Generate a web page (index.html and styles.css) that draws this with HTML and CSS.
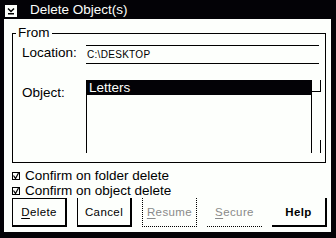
FILE: index.html
```html
<!DOCTYPE html>
<html>
<head>
<meta charset="utf-8">
<link rel="stylesheet" href="styles.css">
</head>
<body>
<div class="window">
  <div class="titlebar">
    <span class="sysmenu">
      <svg width="12" height="12" viewBox="0 0 12 12">
        <rect x="0" y="0" width="12" height="12" fill="#fdfffc"/>
        <path d="M3 3.5 L6 6.5 L9 3.5" fill="none" stroke="#000" stroke-width="1.5"/>
        <rect x="3" y="8" width="6" height="1.5" fill="#000"/>
      </svg>
    </span>
    <span class="title">Delete Object(s)</span>
  </div>
  <div class="client">
    <fieldset class="group">
      <legend class="legend">From</legend>
      <div class="form">
        <span class="label label-loc">Location:</span>
        <div class="field">C:\DESKTOP</div>
        <span class="label label-obj">Object:</span>
        <div class="list">
          <div class="items">
            <div class="item selected">Letters</div>
          </div>
          <div class="scroll">
            <svg width="10" height="73" viewBox="0 0 10 73">
              <rect x="0" y="0" width="1" height="73" fill="#000"/>
              <rect x="9" y="0" width="1" height="12" fill="#000"/>
              <rect x="0" y="11" width="10" height="1" fill="#000"/>
              <rect x="9" y="60" width="1" height="13" fill="#000"/>
            </svg>
          </div>
        </div>
      </div>
    </fieldset>
    <div class="checks">
      <div class="check">
        <svg class="box" width="8" height="8" viewBox="0 0 8 8">
          <rect x="0.5" y="0.5" width="7" height="7" fill="none" stroke="#000"/>
          <path d="M1.5 3.5 L3.5 6.5 L6.5 1" fill="none" stroke="#000" stroke-width="1.2"/>
        </svg>
        <span>Confirm on folder delete</span>
      </div>
      <div class="check">
        <svg class="box" width="8" height="8" viewBox="0 0 8 8">
          <rect x="0.5" y="0.5" width="7" height="7" fill="none" stroke="#000"/>
          <path d="M1.5 3.5 L3.5 6.5 L6.5 1" fill="none" stroke="#000" stroke-width="1.2"/>
        </svg>
        <span>Confirm on object delete</span>
      </div>
    </div>
    <div class="buttons">
      <div class="btn btn-default"><u>D</u>elete</div>
      <div class="btn btn-cancel">Cancel</div>
      <div class="btn btn-disabled btn-framed"><u>R</u>esume</div>
      <div class="btn btn-disabled btn-flat"><u>S</u>ecure</div>
      <div class="btn btn-help">Help</div>
    </div>
  </div>
</div>
</body>
</html>
```
FILE: styles.css
```css
* { box-sizing: border-box; }
html, body { margin: 0; padding: 0; }
body {
  width: 336px;
  height: 238px;
  overflow: hidden;
  font-family: "Liberation Sans", Arial, sans-serif;
  font-size: 13.5px;
  color: #000;
  background: #000;
}
.window {
  width: 336px;
  height: 238px;
  background: #030206;
  display: flex;
  flex-direction: column;
}
.titlebar {
  height: 19px;
  display: flex;
  align-items: center;
  color: #fdfffc;
  flex: none;
}
.sysmenu {
  display: flex;
  margin-left: 5px;
  margin-top: 2px;
}
.title {
  margin-left: 13px;
  line-height: 14px;
  margin-top: 1px;
}
.client {
  flex: 1;
  margin: 0 5px 6px 4px;
  background: #fdfffc;
  display: flex;
  flex-direction: column;
}
.group {
  margin: 8px 5px 0 8px;
  border: 1px solid #000;
  padding: 0 4px 9px 9px;
  min-width: 0;
}
.legend {
  margin-left: -6px;
  padding: 0 2px;
  line-height: 12px;
  height: 12px;
}
.form {
  display: grid;
  grid-template-columns: 64px 1fr;
  align-items: start;
}
.label {
  line-height: 14px;
}
.label-loc {
  margin-top: 7px;
}
.label-obj {
  margin-top: 22px;
}
.field {
  margin-top: 6px;
  margin-right: 2px;
  height: 19px;
  border-top: 1px solid #000;
  border-bottom: 1px solid #000;
  font-size: 10px;
  line-height: 17px;
  padding-left: 1px;
  letter-spacing: 0.3px;
}
.list {
  margin-top: 16px;
  height: 73px;
  border-left: 1px solid #000;
  display: flex;
}
.items {
  flex: 1;
}
.item {
  height: 15px;
  line-height: 15px;
  padding-left: 2px;
}
.selected {
  background: #030206;
  color: #fdfffc;
}
.scroll {
  width: 10px;
  display: flex;
}
.checks {
  margin: 5px 0 0 8px;
  display: flex;
  flex-direction: column;
}
.check {
  height: 15px;
  display: flex;
  align-items: center;
  gap: 5px;
}
.buttons {
  display: flex;
  gap: 10px;
  margin-left: 8px;
}
.btn {
  width: 55px;
  height: 29px;
  display: flex;
  align-items: center;
  justify-content: center;
  font-size: 11.5px;
  letter-spacing: 0.4px;
}
.btn u {
  text-underline-offset: 2px;
}
.btn-default {
  border: 1px solid #000;
  border-right-width: 2px;
  border-bottom-width: 2px;
}
.btn-cancel {
  border-left: 1px solid #000;
  border-right: 2px solid #000;
  border-bottom: 2px solid #000;
}
.btn-disabled {
  color: #8a8a8a;
}
.btn-framed {
  border-left: 1px dotted #000;
  border-right: 1px dotted #000;
  border-bottom: 1px dotted #000;
}
.btn-flat {
  border-bottom: 1px dotted #000;
}
.btn-help {
  border-right: 2px solid #000;
  border-bottom: 2px solid #000;
  font-weight: bold;
}
```
